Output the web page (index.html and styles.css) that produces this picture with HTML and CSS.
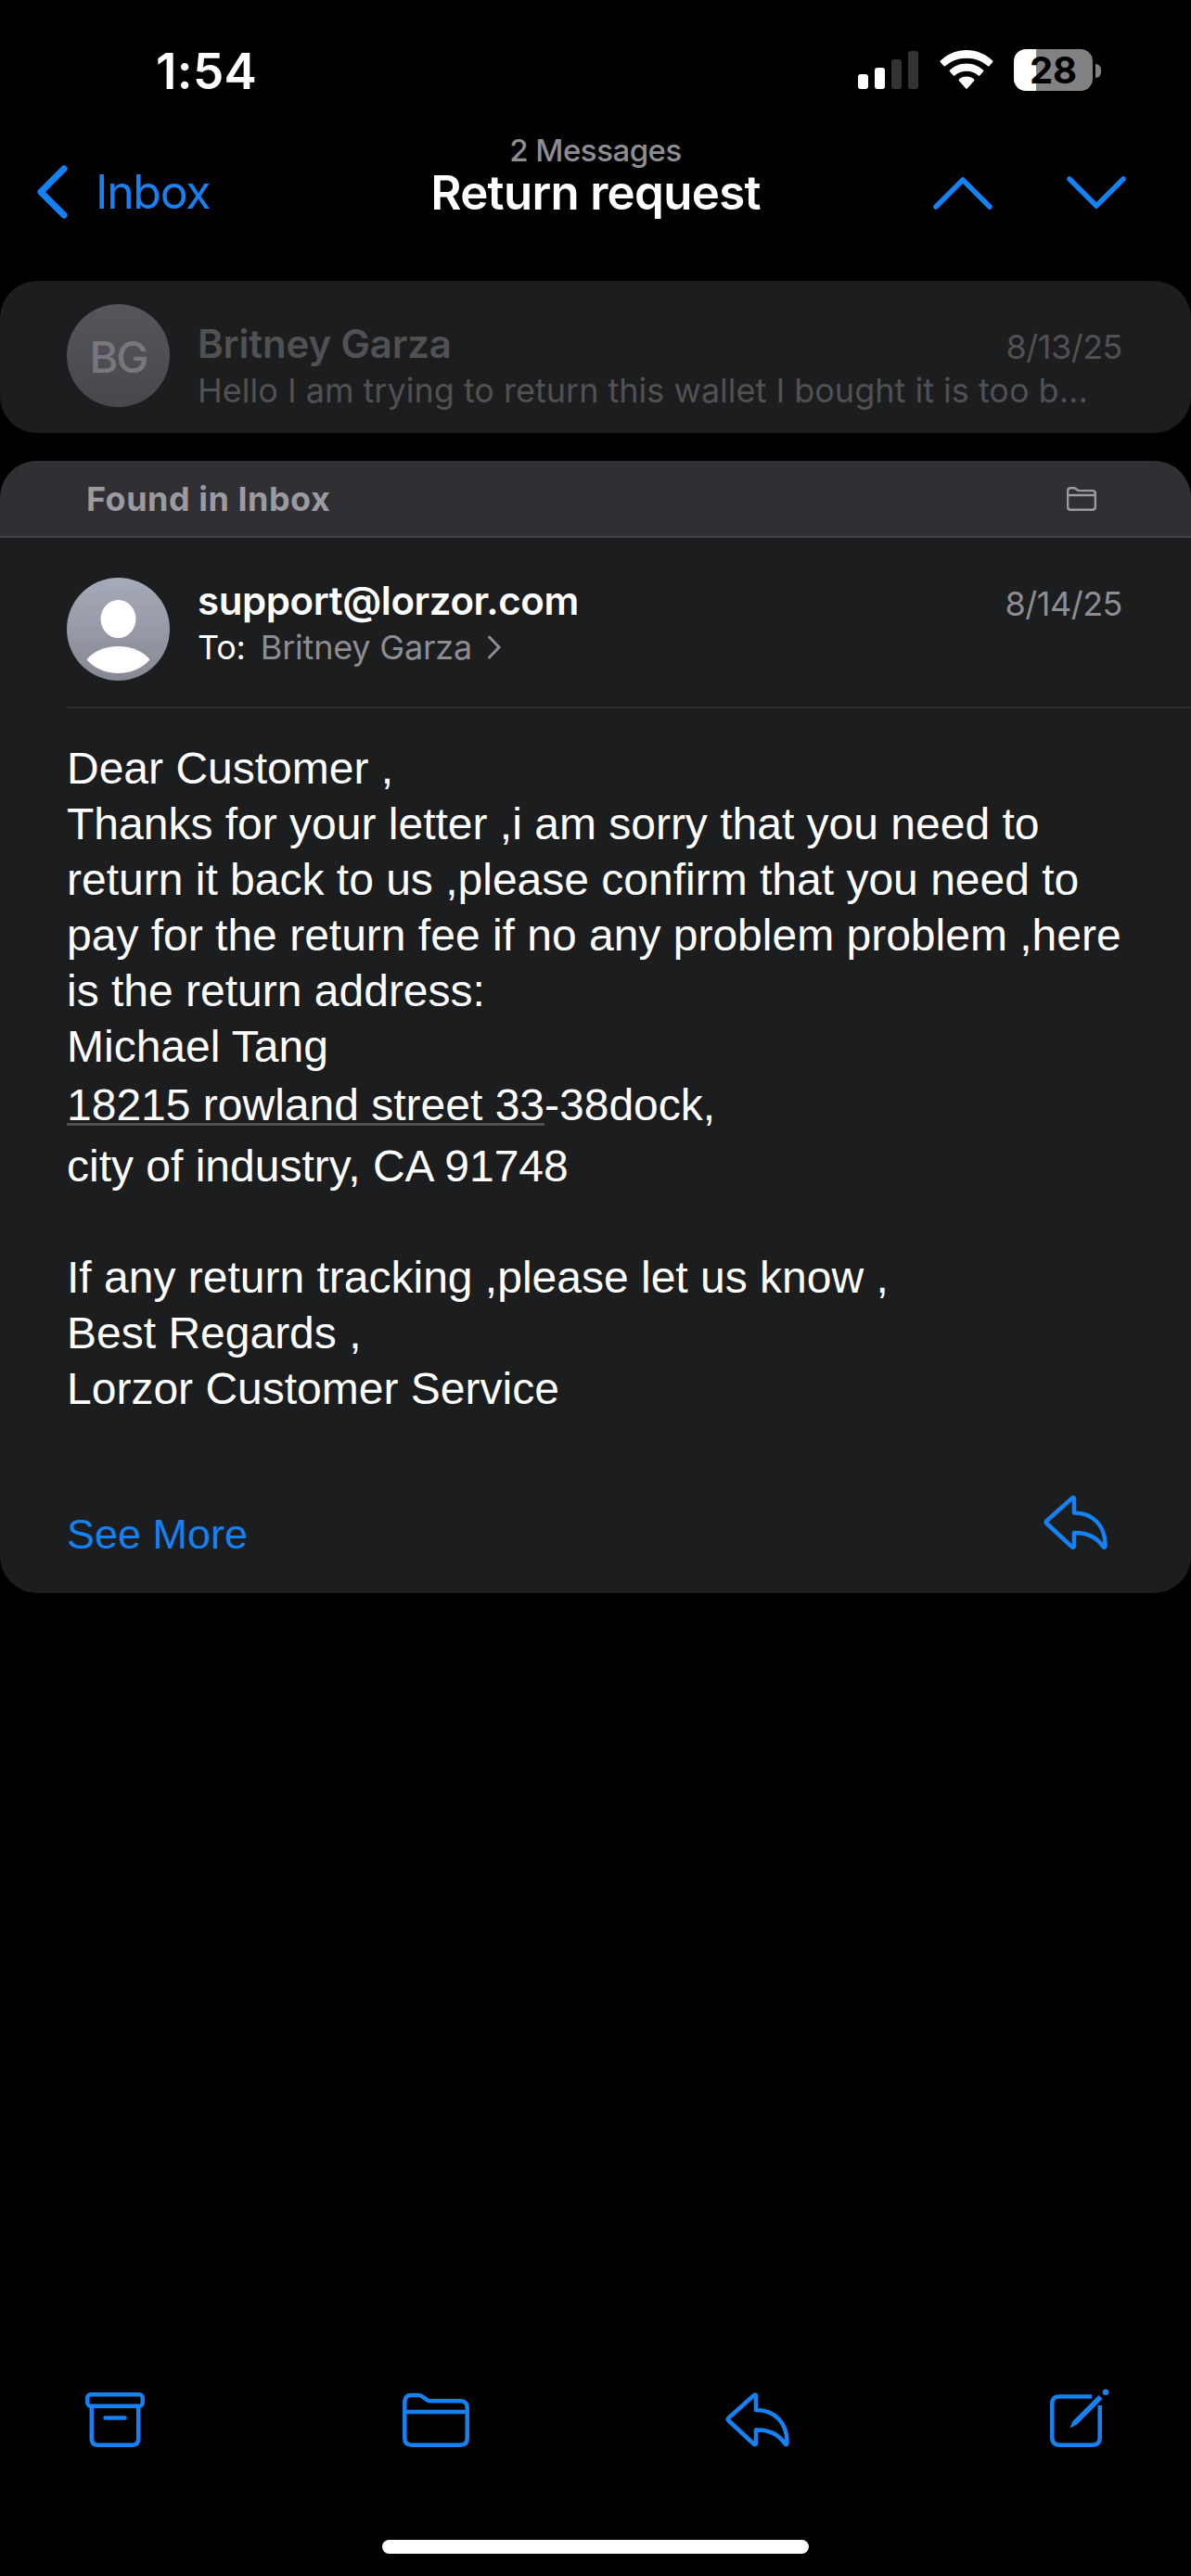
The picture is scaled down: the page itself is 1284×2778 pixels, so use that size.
FILE: index.html
```html
<!DOCTYPE html>
<html lang="en">
<head>
    <meta charset="UTF-8">
    <meta name="viewport" content="width=device-width, initial-scale=1.0">
    <title>Return request</title>
    <link rel="stylesheet" href="styles.css">
</head>
<body>
    <div class="status-bar">
        <div class="time">1:54</div>
        <div class="status-icons">
            <svg class="signal" width="66" height="42" viewBox="0 0 66 42">
                <rect x="0" y="25" width="11" height="16" rx="3" fill="#fff"/>
                <rect x="18" y="18" width="11" height="23" rx="3" fill="#fff"/>
                <rect x="36" y="9" width="11" height="32" rx="3" fill="#333"/>
                <rect x="54" y="0" width="11" height="41" rx="3" fill="#333"/>
            </svg>
            <svg class="wifi" width="58" height="42" viewBox="0 0 58 42">
                <path d="M29 0C18 0 8 4.500 .8 11.600Q.3 12.300.8 13L4.600 17.300Q5.300 17.900 6 17.300C12 11.800 20 8.700 29 8.700S46 11.800 52 17.300Q52.700 17.900 53.400 17.300L57.200 13Q57.700 12.300 57.200 11.600C50 4.500 40 0 29 0Z"/>
                <path d="M29 14.500C21.800 14.500 15.500 17.300 10.800 21.700Q10.300 22.400 10.800 23.100L14.800 27.400Q15.500 28 16.200 27.400C19.600 24.600 24 22.800 29 22.800S38.400 24.600 41.800 27.400Q42.500 28 43.200 27.400L47.200 23.100Q47.700 22.400 47.200 21.700C42.500 17.300 36.200 14.500 29 14.500Z"/>
                <path d="M29 28.500C25.800 28.500 22.900 29.700 20.800 31.700Q20.200 32.400 20.800 33.100L28.300 41.400Q29 42 29.700 41.400L37.200 33.100Q37.800 32.400 37.200 31.700C35.100 29.700 32.200 28.500 29 28.500Z"/>
            </svg>
            <div class="battery">28</div>
            <div class="battery-cap"></div>
        </div>
    </div>

    <div class="nav">
        <div class="back">
            <svg width="36" height="60" viewBox="0 0 36 60"><path d="M31 5L6 30L31 55"/></svg>
            <span>Inbox</span>
        </div>
        <div class="nav-title">
            <div class="count">2 Messages</div>
            <div class="subject">Return request</div>
        </div>
        <div class="arrows">
            <svg width="64" height="36" viewBox="0 0 64 36"><path d="M3 33L32 4L61 33"/></svg>
            <svg width="64" height="36" viewBox="0 0 64 36"><path d="M3 3L32 32L61 3"/></svg>
        </div>
    </div>

    <div class="card collapsed">
        <div class="avatar initials">BG</div>
        <div class="summary">
            <div class="row">
                <span class="name">Britney Garza</span>
                <span class="date">8/13/25</span>
            </div>
            <div class="preview">Hello I am trying to return this wallet I bought it is too b...</div>
        </div>
    </div>

    <div class="card message">
        <div class="found">
            <span>Found in Inbox</span>
            <svg width="32" height="26" viewBox="0 0 72 58"><path d="M2.500 20V10Q2.500 2.500 10 2.500H17Q20 2.500 22.500 4.800L26 7.800Q27.500 9 30 9H62Q69.500 9 69.500 16V48Q69.500 55.500 62 55.500H10Q2.500 55.500 2.500 48V20H69.500"/></svg>
        </div>
        <div class="sender">
            <div class="avatar">
                <svg class="person" width="111" height="111" viewBox="0 0 111 111">
                    <ellipse cx="55.500" cy="44.500" rx="19" ry="20.500"/>
                    <path d="M21.500 88.500C28 79.500 41 74 55.500 74S83 79.500 89.500 88.500C81 98 69 103 55.500 103S30 98 21.500 88.500Z"/>
                </svg>
            </div>
            <div class="summary">
                <div class="row">
                    <span class="from">support@lorzor.com</span>
                    <span class="date">8/14/25</span>
                </div>
                <div class="to">
                    <span>To:</span>
                    <span class="to-name">Britney Garza</span>
                    <svg width="16" height="26" viewBox="0 0 16 26"><path d="M2.500 2L13 13L2.500 24"/></svg>
                </div>
            </div>
        </div>
        <div class="body">
            <div>Dear Customer ,</div>
            <div>Thanks for your letter ,i am sorry that you need to</div>
            <div>return it back to us ,please confirm that you need to</div>
            <div>pay for the return fee if no any problem problem ,here</div>
            <div>is the return address:</div>
            <div>Michael Tang</div>
            <div class="street"><span class="detected">18215 rowland street 33</span>-38dock,</div>
            <div class="city">city of industry, CA 91748</div>
            <div>If any return tracking ,please let us know ,</div>
            <div>Best Regards ,</div>
            <div>Lorzor Customer Service</div>
        </div>
        <div class="actions">
            <span class="see-more">See More</span>
            <svg width="70" height="60" viewBox="0 0 70 60"><path d="M31 3.500Q33 2 33 5V19.500C54 19.500 66.500 34 66.500 54Q66.500 58.500 64 55.500C57 45.500 48 40.500 33 41V54.500Q33 58 30.500 56L3.500 31Q2 29.500 3.500 28Z"/></svg>
        </div>
    </div>

    <div class="toolbar">
        <svg width="64" height="64" viewBox="0 0 64 64">
            <rect x="2.300" y="6.300" width="59.400" height="12.500" rx="3.500"/>
            <path d="M6.800 19V54Q6.800 60.700 13.500 60.700H50.500Q57.200 60.700 57.200 54V19M21.500 31.500H42.500"/>
        </svg>
        <svg width="72" height="64" viewBox="0 -4.500 72 64"><path d="M2.300 20.500V10Q2.300 2.500 9.500 2.500H17Q20 2.500 22.500 4.800L26 7.500Q27.500 8.700 30 8.700H62Q69.700 8.700 69.700 16V49Q69.700 56.200 62 56.200H10Q2.300 56.200 2.300 49V20.500H69.700"/></svg>
        <svg class="reply" width="70" height="64" viewBox="0 -3.500 70 64"><path d="M31 3.500Q33 2 33 5V19.500C54 19.500 66.500 34 66.500 54Q66.500 58.500 64 55.500C57 45.500 48 40.500 33 41V54.500Q33 58 30.500 56L3.500 31Q2 29.500 3.500 28Z"/></svg>
        <svg width="64" height="64" viewBox="0 0 64 64">
            <path class="sheet" d="M45 8.500H10Q2.300 8.500 2.300 16V53Q2.300 60.700 10 60.700H46Q53.700 60.700 53.700 53V18"/>
            <path class="solid" d="M52.500 7L56.500 11L28.500 39L21.500 42.500L24.500 35Z"/>
            <circle class="solid" cx="60" cy="3.800" r="3.300"/>
        </svg>
    </div>
    <div class="home-indicator"></div>
</body>
</html>
```
FILE: styles.css
```css
* { box-sizing: border-box; }
body { margin: 0; background-color: #000; color: #fff; font-family: Inter, sans-serif; height: 2778px; display: flex; flex-direction: column; }
svg { display: block; fill: none; flex: none; }

.status-bar { display: flex; justify-content: space-between; height: 141px; padding: 47px 97px 0 168px; }
.time { font-size: 53px; font-weight: 600; line-height: 60px; letter-spacing: 0.3px; }
.status-icons { display: flex; align-items: flex-start; padding-top: 6px; }
.signal { margin-top: 2px; }
.wifi { margin: 1px 22px 0; fill: #fff; }
.battery { width: 85px; height: 45px; border-radius: 13px; background: linear-gradient(to right, #fff 24px, #828282 24px); color: #000; font-size: 40px; font-weight: 700; line-height: 46px; text-align: center; }
.battery-cap { width: 6px; height: 15px; margin: 16px 0 0 3px; border-radius: 0 6px 6px 0; background-color: #828282; }

.nav { display: grid; grid-template-columns: 1fr auto 1fr; height: 162px; padding: 0 70px; }
.back { display: flex; align-items: center; gap: 29px; height: 60px; margin: 36px 0 0 -32px; color: #1482f2; font-size: 50px; letter-spacing: -1.3px; }
.back svg, .arrows svg, .message .actions svg, .toolbar svg { stroke: #1482f2; stroke-width: 7; stroke-linecap: round; stroke-linejoin: round; }
.nav-title { text-align: center; }
.count { color: #8d8d92; font-size: 33px; font-weight: 500; line-height: 42px; letter-spacing: -0.5px; }
.subject { font-size: 51px; font-weight: 600; line-height: 49px; letter-spacing: -0.7px; }
.arrows { display: flex; justify-content: flex-end; gap: 80px; margin-top: 49px; }
.arrows svg { stroke-width: 5.5; }

.card { background-color: #1c1d1e; border-radius: 40px; overflow: hidden; }
.collapsed { display: flex; gap: 30px; height: 164px; padding: 25px 74px 0 72px; color: #515154; }
.avatar { width: 111px; height: 111px; flex: none; border-radius: 50%; background: linear-gradient(#a6abb9, #858992); }
.initials { background: linear-gradient(#55565c, #47474c); color: #77777c; font-size: 47px; font-weight: 500; line-height: 114px; letter-spacing: -2px; text-align: center; }
.person { fill: #fff; }
.summary { flex: 1; line-height: 50px; }
.row { display: flex; justify-content: space-between; }
.collapsed .summary { padding-top: 18px; }
.name, .from { font-size: 42px; font-weight: 600; letter-spacing: -0.15px; }
.from { letter-spacing: -0.4px; }
.date, .preview, .to { font-size: 36px; }
.date { height: 50px; padding-top: 3px; letter-spacing: -0.5px; }

.message { height: 1221px; margin-top: 30px; }
.found { display: flex; justify-content: space-between; align-items: center; height: 83px; padding: 0 102px 0 93px; background-color: #302f33; border-bottom: 2px solid #3f4042; color: #9b9aa0; font-size: 36px; font-weight: 700; letter-spacing: 0.5px; }
.found svg { stroke: #9b9aa0; stroke-width: 5.5; }
.sender { display: flex; gap: 30px; height: 184px; margin-left: 72px; padding: 43px 74px 0 0; border-bottom: 2px solid #2e2f31; }
.sender .date, .to-name { color: #8d8d92; }
.to { display: flex; align-items: center; gap: 16px; letter-spacing: -0.2px; }
.to svg { stroke: #8d8d92; stroke-width: 3; stroke-linecap: round; }

.body { margin: 35px 72px 0; font-family: "Liberation Sans", Arial, sans-serif; font-size: 48px; line-height: 60px; white-space: nowrap; }
.street { line-height: 66px; }
.city { margin-bottom: 58px; line-height: 65px; }
.detected { text-decoration: underline; text-decoration-color: #505051; text-decoration-thickness: 3px; text-underline-offset: 3px; text-decoration-skip-ink: none; }
.actions { display: flex; justify-content: space-between; margin-top: 84px; padding: 0 89px 0 72px; font-family: "Liberation Sans", Arial, sans-serif; }
.see-more { padding-top: 13px; color: #1482f2; font-size: 45px; line-height: 60px; }
.message .actions svg, .toolbar svg { stroke-width: 4.5; }

.toolbar { display: flex; justify-content: space-between; margin-top: auto; padding: 0 88px 0 92px; }
.toolbar .reply { margin: 0 2px 0 -2px; }
.toolbar .sheet { stroke-linecap: butt; }
.toolbar .solid { fill: #1482f2; stroke: none; }
.home-indicator { width: 460px; height: 15px; margin: 99px auto 24px; border-radius: 8px; background-color: #fff; }
```
